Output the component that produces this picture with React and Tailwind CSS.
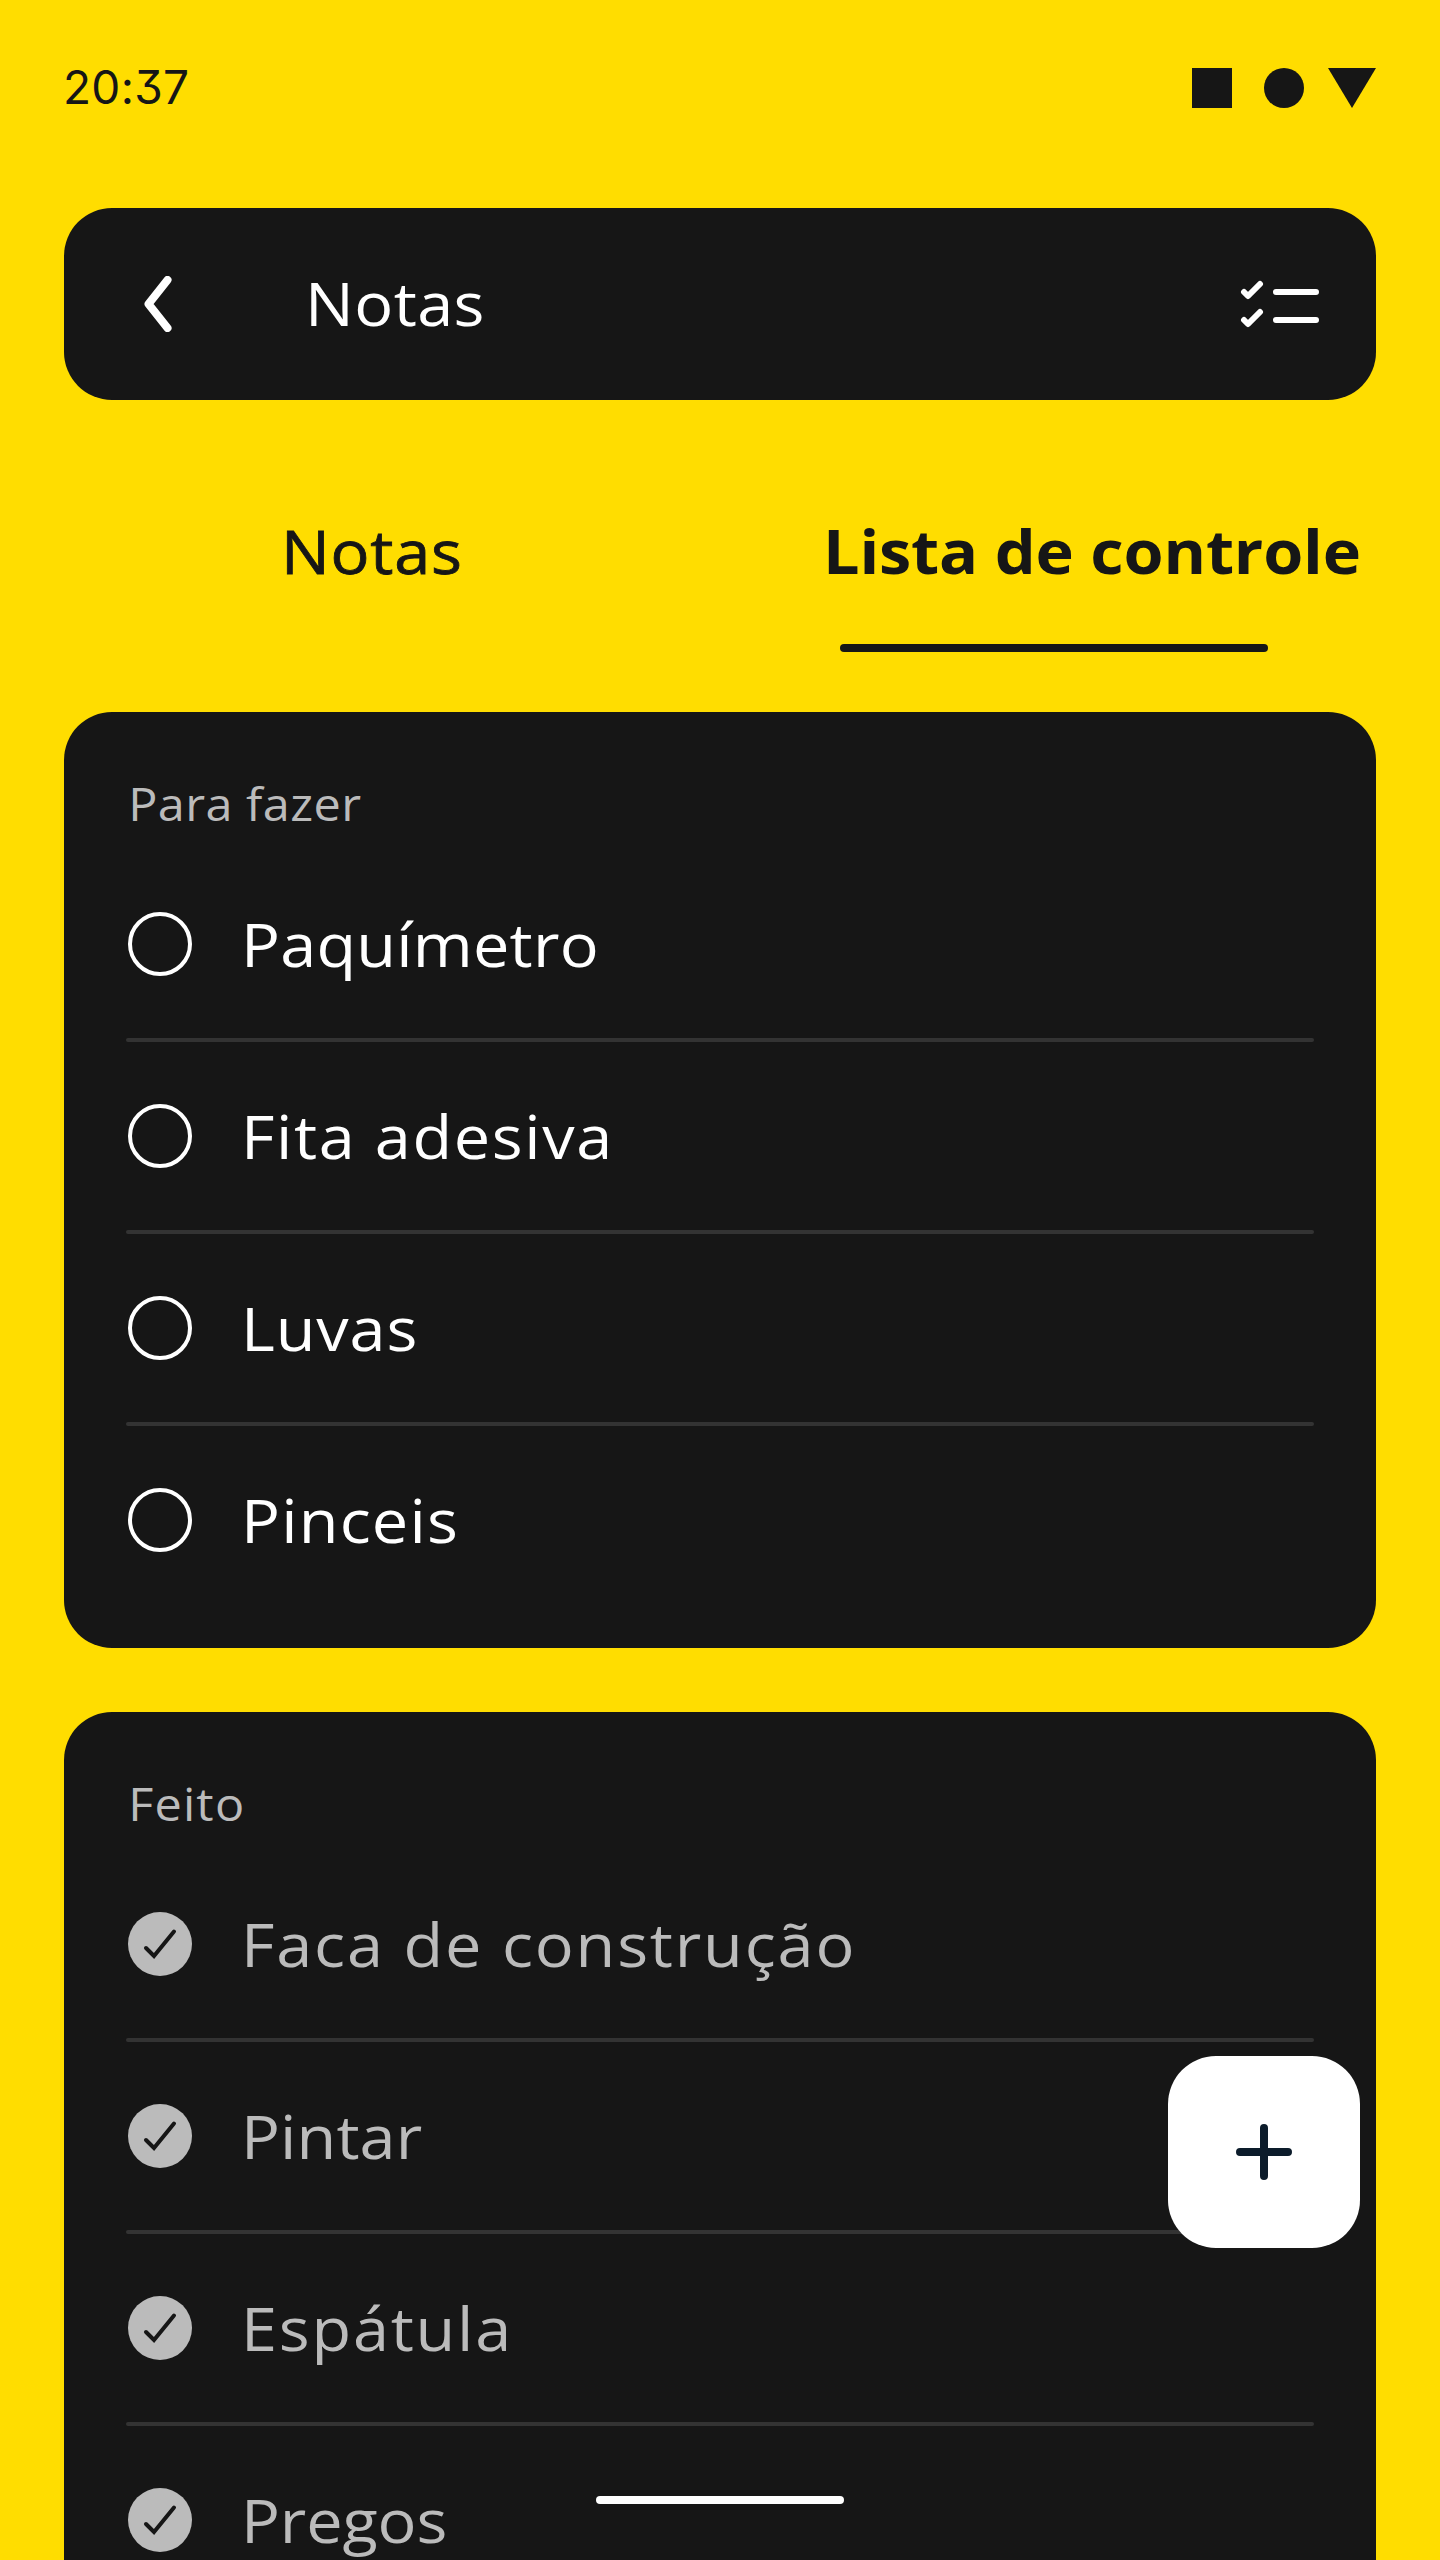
import React, { useState } from 'react';

const TODO_ITEMS = [
  { label: 'Paquímetro', tracking: 'tracking-[0.2px]' },
  { label: 'Fita adesiva', tracking: 'tracking-[1.5px]' },
  { label: 'Luvas', tracking: 'tracking-[0.8px]' },
  { label: 'Pinceis', tracking: 'tracking-[1.1px]' },
];

const DONE_ITEMS = [
  { label: 'Faca de construção', tracking: 'tracking-[1.7px]' },
  { label: 'Pintar', tracking: 'tracking-[0.1px]' },
  { label: 'Espátula', tracking: 'tracking-[1.65px]' },
  { label: 'Pregos', tracking: 'tracking-[-0.1px]' },
];

const StatusBar = () => (
  <div className="flex h-10 items-center justify-between">
    <span className="-ml-px pb-[2px] font-['Inter',sans-serif] text-[46px] leading-[56px] tracking-[0.3px] text-[#161616] [font-feature-settings:'cv09']">
      20:37
    </span>
    <div className="flex text-[#161616]">
      <div className="size-10 bg-[#161616]" />
      <div className="ml-8 size-10 rounded-full bg-[#161616]" />
      <svg className="ml-6 h-10 w-12" viewBox="0 0 48 40" fill="currentColor">
        <path d="M0 0h48L24 40z" />
      </svg>
    </div>
  </div>
);

const Header = () => (
  <header className="mt-[100px] flex h-48 items-center rounded-[48px] bg-[#161616] pr-14 pl-20 text-white">
    <button type="button" aria-label="Voltar">
      <svg className="h-14 w-8" viewBox="0 0 32 56" fill="none" stroke="currentColor" strokeWidth="8" strokeLinecap="round" strokeLinejoin="round">
        <path d="M23.5 4L4.5 28l19 24" />
      </svg>
    </button>
    <h1 className="ml-[129px] origin-left scale-x-108 pb-[2px] text-[60px] leading-[80px] tracking-[0.4px]">Notas</h1>
    <button type="button" aria-label="Lista" className="ml-auto">
      <svg className="h-12 w-20" viewBox="0 0 80 48" fill="none" stroke="currentColor" strokeWidth="6" strokeLinecap="round" strokeLinejoin="round">
        <path d="M4 12l4 4L20 4M36 12h40" />
        <path d="M4 40l4 4 12-12M36 40h40" />
      </svg>
    </button>
  </header>
);

const Tabs = () => (
  <nav className="mt-[111px] flex h-[201px] items-start text-[60px] leading-[80px] text-[#161616]">
    <button type="button" className="ml-[217px] w-[542px] text-left">
      <span className="inline-block origin-left scale-x-108 tracking-[0.7px] [-webkit-text-stroke:0.8px_#161616]">Notas</span>
    </button>
    <button type="button" className="flex flex-col items-start">
      <span className="origin-left scale-x-108 font-bold tracking-[-0.15px] whitespace-nowrap">Lista de controle</span>
      <span className="mt-[53px] ml-[17px] h-2 w-[428px] rounded-full bg-[#161616]" />
    </button>
  </nav>
);

const Checkbox = ({ checked }) =>
  checked ? (
    <svg className="size-16 text-[#bbbbbb]" viewBox="0 0 64 64" fill="none">
      <circle cx="32" cy="32" r="32" fill="currentColor" />
      <path d="M18 36l8 8 20-24.5" stroke="#161616" strokeWidth="4" strokeLinecap="round" />
    </svg>
  ) : (
    <div className="size-16 rounded-full border-4 border-white" />
  );

const ListCard = ({ title, titleTracking, items, done, className }) => (
  <section className={`rounded-[48px] bg-[#161616] px-[62px] pt-[62px] pb-8 ${className || ''}`}>
    <h2 className={`mb-3.5 origin-left scale-x-108 pl-0.5 text-[45px] leading-[60px] text-[#bbbbbb] ${titleTracking}`}>{title}</h2>
    {items.map(({ label, tracking }, i) => (
      <React.Fragment key={label}>
        {i > 0 && <div className="-my-0.5 h-1 rounded-full bg-[#333333]" />}
        <div className="flex h-48 items-center pl-0.5">
          <Checkbox checked={done} />
          <span className={`ml-[49px] origin-left scale-x-108 text-[60px] leading-[80px] ${tracking} ${done ? 'text-[#bbbbbb]' : 'text-white'}`}>
            {label}
          </span>
        </div>
      </React.Fragment>
    ))}
  </section>
);

export default function App() {
  const [todo] = useState(TODO_ITEMS);

  return (
    <div className="relative h-[2560px] w-[1440px] overflow-hidden bg-[#ffdd00] px-16 pt-[68px] font-['Open_Sans',sans-serif]">
      <StatusBar />
      <Header />
      <Tabs />
      <ListCard title="Para fazer" titleTracking="tracking-[0.4px]" items={todo} />
      <ListCard title="Feito" titleTracking="tracking-[1.1px]" items={DONE_ITEMS} done className="mt-16" />

      {/* Floating add button */}
      <button type="button" aria-label="Adicionar" className="absolute top-[2056px] right-20 flex size-48 items-center justify-center rounded-[48px] bg-white text-[#0c1c2b]">
        <svg className="size-14" viewBox="0 0 56 56" fill="none" stroke="currentColor" strokeWidth="8" strokeLinecap="round">
          <path d="M28 4v48M4 28h48" />
        </svg>
      </button>

      {/* Home indicator */}
      <div className="absolute bottom-14 left-[596px] h-2 w-[248px] rounded-full bg-white" />
    </div>
  );
}
